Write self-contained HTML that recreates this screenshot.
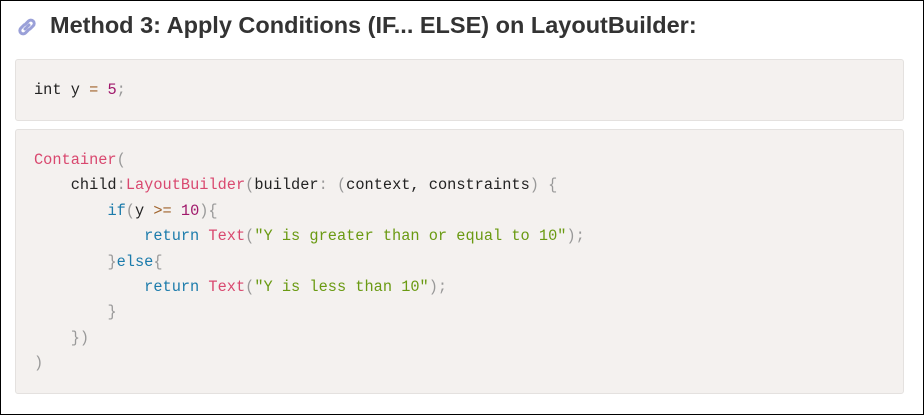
<!DOCTYPE html>
<html><head><style>
html,body{margin:0;padding:0}
body{width:922px;height:413px;border:1px solid #000;background:#fff;position:relative;overflow:hidden;font-family:"Liberation Sans",sans-serif}
h2{position:absolute;left:49px;top:9px;margin:0;font-size:23.5px;font-weight:bold;color:#333;white-space:nowrap;line-height:30px}
.ic{position:absolute;left:14px;top:14px}
.box{position:absolute;left:14px;width:887px;background:#f4f1ef;border:1px solid #e4e1df;border-radius:3px;font-family:"Liberation Mono",monospace;font-size:15.3px;color:#222;white-space:pre;line-height:25.4px}
.b1{top:58px;height:60px}
.b2{top:128px;height:263px}
.code{position:absolute;left:18px}
.r{color:#d9486f}.p{color:#999}.k{color:#1b7bab}.n{color:#a0186b}.o{color:#a0632b}.s{color:#6a9a12}
</style></head><body>
<svg class="ic" width="24" height="24" viewBox="0 0 24 24"><g fill="none" stroke="#9aa0d8" stroke-width="3" stroke-linecap="round"><path d="M10 14l4-4"/><path d="M9 10l-3.2 3.2a3.3 3.3 0 0 0 4.7 4.7l3.2-3.2"/><path d="M15 14l3.2-3.2a3.3 3.3 0 0 0-4.7-4.7L10.3 9.3"/></g></svg>
<h2>Method 3: Apply Conditions (IF... ELSE) on LayoutBuilder:</h2>
<div class="box b1"><div class="code" style="top:18px">int y <span class="o">=</span> <span class="n">5</span><span class="p">;</span></div></div>
<div class="box b2"><div class="code" style="top:18px"><span class="r">Container</span><span class="p">(</span>
    child<span class="p">:</span><span class="r">LayoutBuilder</span><span class="p">(</span>builder<span class="p">:</span> <span class="p">(</span>context, constraints<span class="p">)</span> <span class="p">{</span>
        <span class="k">if</span><span class="p">(</span>y <span class="o">&gt;=</span> <span class="n">10</span><span class="p">){</span>
            <span class="k">return</span> <span class="r">Text</span><span class="p">(</span><span class="s">"Y is greater than or equal to 10"</span><span class="p">);</span>
        <span class="p">}</span><span class="k">else</span><span class="p">{</span>
            <span class="k">return</span> <span class="r">Text</span><span class="p">(</span><span class="s">"Y is less than 10"</span><span class="p">);</span>
        <span class="p">}</span>
    <span class="p">})</span>
<span class="p">)</span></div></div>
</body></html>
